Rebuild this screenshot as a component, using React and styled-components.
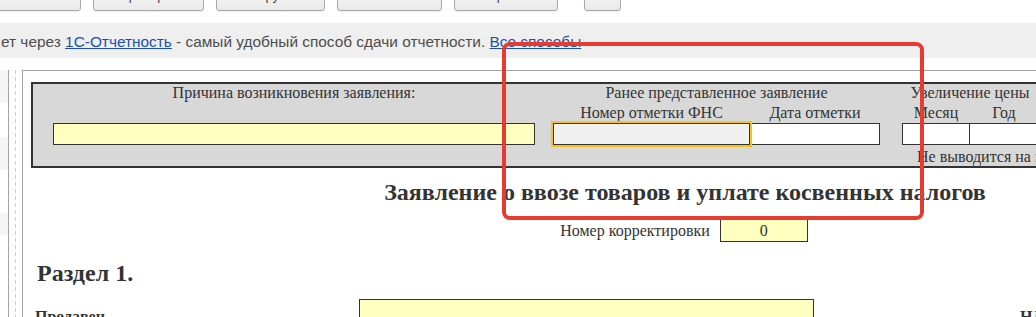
import React from "react"
import styled, { createGlobalStyle } from "styled-components"

const GlobalStyle = createGlobalStyle`
    html, body {
        margin: 0;
        padding: 0;
        background: #fff;
        overflow: hidden;
    }
`

const Page = styled.div`
    position: relative;
    width: 1036px;
    height: 317px;
    overflow: hidden;
`

const Toolbar = styled.div`
    display: flex;
    align-items: flex-start;
    gap: 12px;
    height: 23px;
    margin-left: -19px;
`

const ToolButton = styled.div`
    flex: none;
    display: flex;
    align-items: center;
    justify-content: center;
    box-sizing: border-box;
    width: ${p => p.$w}px;
    height: 29px;
    margin-top: -18px;
    padding-bottom: 3px;
    margin-left: ${p => p.$extra || 0}px;
    border: 1px solid #a9a9a9;
    border-radius: 3px;
    background: linear-gradient(#fdfdfd, #e9e9e9);
    box-shadow: 0 1px 1px rgba(0, 0, 0, 0.08);
    font-family: Arial, "Liberation Sans", sans-serif;
    font-size: 13px;
    color: #404040;
`

const Banner = styled.div`
    height: 35px;
    background: #efefef;
    font-family: Arial, "Liberation Sans", sans-serif;
    font-size: 15.4px;
    line-height: 35px;
    color: #4d4d4d;
    white-space: nowrap;
    padding-left: 1px;
    padding-top: 1px;
    box-sizing: border-box;
`

const BannerLink = styled.a`
    color: #1c4fb0;
    text-decoration: underline;
`

const Workspace = styled.div`
    display: flex;
    margin-top: 12px;
    height: 259px;
`

const SidePanel = styled.div`
    display: flex;
    flex-direction: column;
    width: 8px;
    flex: none;
    border-right: 1px solid #a3a3a3;
`

const Stripe = styled.div`
    height: ${p => p.$h}px;
    background: ${p => (p.$shade ? "#f5f5f5" : "#fff")};
`

const Splitter = styled.div`
    width: 13px;
    flex: none;
    background: repeating-linear-gradient(to bottom, #cfcfcf 0 4px, transparent 4px 7px) no-repeat 6px 0 / 1px 100%;
`

const Frame = styled.div`
    flex: 1;
    border-left: 1px solid #a3a3a3;
    border-top: 1px solid #a3a3a3;
    padding: 11px 0 0 8px;
    overflow: hidden;
`

const Sheet = styled.div`
    width: 1308px;
    font-family: "Liberation Serif", "Times New Roman", serif;
    color: #333;
`

const HeaderBox = styled.div`
    display: grid;
    grid-template-columns: 482px 18px 197px 130px 22px 68px 68px 1fr;
    grid-template-rows: 20px 19px 22px 21px;
    padding-left: 20px;
    border: 2px solid #333;
    background: #d8d8d8;
    font-size: 16px;
    line-height: 18px;
`

const Label = styled.div`
    grid-column: ${p => p.$col};
    grid-row: ${p => p.$row};
    text-align: center;
    white-space: nowrap;
`

const Field = styled.div`
    grid-column: ${p => p.$col};
    grid-row: 3;
    position: relative;
    z-index: ${p => (p.$focus ? 1 : 0)};
    box-sizing: border-box;
    border: 1px solid #333;
    border-left-width: ${p => (p.$joined ? 0 : 1)}px;
    background: ${p => p.$bg || "#fff"};
    box-shadow: ${p => (p.$focus ? "0 0 0 2px #f7c21c" : "none")};
`

const Note = styled.div`
    grid-column: 6 / 9;
    grid-row: 4;
    padding: 3px 0 0 15px;
    white-space: nowrap;
`

const Title = styled.h1`
    margin: 10px 0 0;
    font-size: 24px;
    line-height: 28px;
    font-weight: bold;
    text-align: center;
`

const CorrectionRow = styled.div`
    display: flex;
    justify-content: center;
    align-items: center;
    gap: 10px;
    margin-top: 13px;
    padding-right: 2px;
    font-size: 16px;
    line-height: 18px;
`

const CorrectionInput = styled.div`
    width: 88px;
    height: 23px;
    box-sizing: border-box;
    border: 1px solid #333;
    background: #ffffc0;
    text-align: center;
    line-height: 21px;
`

const SectionTitle = styled.h2`
    margin: 17px 0 0 6px;
    font-size: 24px;
    line-height: 28px;
    font-weight: bold;
`

const PartyRow = styled.div`
    display: grid;
    grid-template-columns: 324px 455px 206px auto;
    margin-top: 12px;
    padding-left: 4px;
`

const PartyLabel = styled.div`
    grid-column: ${p => p.$col};
    padding-top: 9px;
    font-size: 16px;
    line-height: 18px;
    font-weight: bold;
`

const PartyField = styled.div`
    height: 24px;
    box-sizing: border-box;
    border: 1px solid #333;
    background: #ffffc0;
`

// red annotation frame drawn over the screenshot
const Highlight = styled.svg`
    position: absolute;
    left: 502px;
    top: 42px;
    z-index: 2;
    pointer-events: none;
`

const buttons = [
    { label: "Записать", w: 100 },
    { label: "Проверка", w: 111 },
    { label: "Выгрузка", w: 109 },
    { label: "Печать", w: 105 },
    { label: "Отправить", w: 104 },
    { label: "?", w: 37, extra: 14 },
]

const stripes = [
    { h: 33, shade: true },
    { h: 34 },
    { h: 33, shade: true },
    { h: 43 },
    { h: 22, shade: true },
    { h: 94 },
]

const App = () => {
    return (
        <>
            <GlobalStyle />
            <Page>
                <Toolbar>
                    {buttons.map((b, i) => (
                        <ToolButton key={i} $w={b.w} $extra={b.extra}>{b.label}</ToolButton>
                    ))}
                </Toolbar>
                <Banner>
                    ет через <BannerLink>1С-Отчетность</BannerLink> - самый удобный способ сдачи отчетности. <BannerLink>Все способы</BannerLink>
                </Banner>
                <Workspace>
                    <SidePanel>
                        {stripes.map((s, i) => (
                            <Stripe key={i} $h={s.h} $shade={s.shade} />
                        ))}
                    </SidePanel>
                    <Splitter />
                    <Frame>
                        <Sheet>
                            <HeaderBox>
                                <Label $col="1" $row="1">Причина возникновения заявления:</Label>
                                <Label $col="3 / 5" $row="1">Ранее представленное заявление</Label>
                                <Label $col="6 / 8" $row="1">Увеличение цены</Label>
                                <Label $col="3" $row="2">Номер отметки ФНС</Label>
                                <Label $col="4" $row="2">Дата отметки</Label>
                                <Label $col="6" $row="2">Месяц</Label>
                                <Label $col="7" $row="2">Год</Label>
                                <Field $col="1" $bg="#ffffc0" />
                                <Field $col="3" $bg="#f0f0f0" $focus />
                                <Field $col="4" $joined />
                                <Field $col="6" />
                                <Field $col="7" $joined />
                                <Note>Не выводится на печать</Note>
                            </HeaderBox>
                            <Title>Заявление о ввозе товаров и уплате косвенных налогов</Title>
                            <CorrectionRow>
                                <span>Номер корректировки</span>
                                <CorrectionInput>0</CorrectionInput>
                            </CorrectionRow>
                            <SectionTitle>Раздел 1.</SectionTitle>
                            <PartyRow>
                                <PartyLabel $col="1">Продавец</PartyLabel>
                                <PartyField />
                                <span />
                                <PartyLabel $col="4">НДС</PartyLabel>
                            </PartyRow>
                        </Sheet>
                    </Frame>
                </Workspace>
                <Highlight width="422" height="178" viewBox="0 0 422 178">
                    <rect x="2" y="2" width="418" height="174" rx="6" fill="none" stroke="#e63b2f" strokeWidth="4" />
                </Highlight>
            </Page>
        </>
    )
}

export default App
